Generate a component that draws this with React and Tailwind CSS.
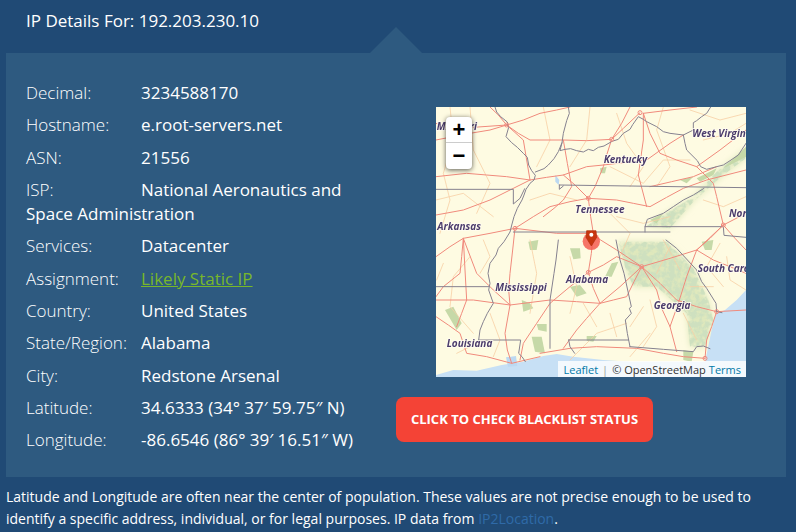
const rows = [
  { label: 'Decimal:', value: '3234588170' },
  { label: 'Hostname:', value: 'e.root-servers.net' },
  { label: 'ASN:', value: '21556' },
  { label: 'ISP:', value: 'National Aeronautics and Space Administration' },
  { label: 'Services:', value: 'Datacenter' },
  { label: 'Assignment:', value: 'Likely Static IP', link: true },
  { label: 'Country:', value: 'United States' },
  { label: 'State/Region:', value: 'Alabama' },
  { label: 'City:', value: 'Redstone Arsenal' },
  { label: 'Latitude:', value: '34.6333 (34° 37′ 59.75″ N)' },
  { label: 'Longitude:', value: '-86.6546 (86° 39′ 16.51″ W)' },
];

// coordinates are 3x map pixels, same grid as the zoomed crops
const borders = [
  'M195 21 L200 36 L212 50 L232 66 L236 82 L228 110 L245 128 L262 142 L280 160 L292 172 L296 195 L305 212 L316 226 L312 240 L300 250 L288 268 L282 285 L276 300 L262 325 L252 350 L246 372 L240 396 L222 425 L205 445 L198 465 L180 490 L174 520 L180 550 L176 570 L190 610 L172 640 L160 665 L150 690 L146 720',
  'M415 21 L418 40 L410 62 L400 100 L396 128 L390 152 L405 148 L422 146 L440 152 L460 156 L475 148 L490 152 L505 142 L522 138 L546 124 L565 118 L580 100 L600 88 L608 74 L625 50 L640 58 L650 65 L680 80 L700 95 L720 100 L760 105 L790 90 L790 68 L800 62 L815 50 L830 40 L842 21',
  'M760 105 L765 130 L770 150 L802 182 L812 200 L830 208 L860 200 L880 195 L900 182 L925 165 L948 130',
  'M396 128 L385 155 L372 176 L355 195 L342 206 L316 216',
  'M18 268 L250 268 L250 312 L270 295 L284 266',
  'M388 255 L948 263 M388 255 L388 268 L400 258',
  'M250 396 L720 396 M645 396 L645 380 L880 380 L882 406 L948 412',
  'M645 380 L652 358 L700 340 L730 320 L760 300 L790 285 L822 265',
  'M18 560 L176 560',
  'M385 420 L378 480 L372 520 L360 600 L360 745',
  'M558 420 L570 480 L582 520 L604 620 L598 625 L604 640 L586 660 L592 700 L600 740',
  'M416 720 L596 720 M416 720 L420 740 L434 760',
  'M600 740 L700 748 L790 755 L800 740 L820 738 L840 746',
  'M708 420 L740 445 L800 510 L815 545 L830 565 L858 610 L860 635 L876 638',
  'M146 720 L272 720 L266 760 L276 770 L286 785',
];

const roads = [
  'M18 120 L120 100 L180 90 L230 75 L280 60 L330 40 L380 30 L420 21',
  'M230 75 L265 100 L300 120 L400 120 L470 122 L545 118 L580 85 L630 38',
  'M230 75 L205 45 L180 21 M230 75 L130 82 L60 90 L18 70',
  'M545 118 L575 70 L600 21 M545 118 L530 165 L520 200 L495 260 L475 295',
  'M475 295 L435 255 L400 225 L350 232 L300 240 L240 270 L180 300 L100 330 L18 345',
  'M475 295 L560 300 L610 310 L660 320 L710 292 L760 265 L830 240 L948 210',
  'M475 295 L420 305 L360 320 L310 350 L255 385 L180 400 L100 415 L60 440 L18 470',
  'M255 385 L248 450 L240 520 L236 570 L240 615 L225 700 L232 750 L245 790',
  'M255 385 L380 400 L480 400 L560 450 L635 500',
  'M475 295 L482 350 L490 400 L484 460 L475 517 L420 560 L360 610 L320 670 L280 730 L270 780',
  'M475 517 L520 495 L560 470 L635 500 L720 475 L800 450 L840 415 L880 375 L948 340',
  'M635 500 L570 560 L510 610 L470 655 L440 690 L400 745',
  'M475 517 L490 565 L510 610 L550 600 L590 590 L612 545 L635 500',
  'M635 500 L680 570 L695 625 L720 680 L740 755',
  'M635 500 L690 550 L740 600 L800 620 L860 635 L948 630',
  'M860 635 L845 680 L830 720 L825 775',
  'M18 600 L130 600 L240 615 L360 600 L440 605 L510 610',
  'M18 650 L55 675 L90 700 L110 760 L170 770 L245 790 L330 770',
  'M330 760 L420 745 L500 740 L620 745 L700 760 L760 770 L825 775',
  'M650 320 L625 225 L640 120 L640 40',
  'M880 375 L860 290 L850 250 L800 200 L740 180 L690 160 L660 100 L640 40',
  'M800 200 L870 150 L948 90 M660 260 L725 245 L790 230 L860 200',
  'M400 120 L412 190 L425 260 L400 300 L372 325 L340 350',
  'M640 40 L720 30 L800 21',
  'M18 230 L110 220 L170 225 L230 230 L300 240',
  'M100 415 L95 470 L90 520 L40 560 L18 590 M100 415 L105 510 L110 600 L95 640 L80 680',
  'M880 375 L915 415 L948 450 M880 375 L800 450 L770 530 L745 610 L720 680',
  'M300 240 L290 180 L280 120 L230 75 M800 450 L850 480 L900 500 L948 520',
  'M240 615 L190 570 L140 520 L100 415',
  'M400 225 L470 200 L520 195 L650 180 L720 130 L760 105',
];

const minorRoads = [
  'M60 21 L70 120 L40 220 L60 300 L30 400 M120 21 L130 150 L180 250 L140 340',
  'M340 21 L360 120 L320 200 M480 21 L470 120 L420 200 M700 21 L680 90 L720 200 L680 260',
  'M540 200 L640 250 L700 180 L780 180 M540 340 L600 400 L570 470 M300 420 L320 520 L300 640',
  'M420 470 L440 560 L420 640 M120 470 L70 530 L60 620 L130 700 M180 640 L210 720 L190 770',
  'M660 600 L680 680 L640 740 M760 640 L800 720 M890 470 L900 540 L948 570 M540 640 L560 710',
  'M18 300 L100 280 L190 350 M700 420 L750 510 M420 780 L500 700 L590 670',
  'M560 40 L590 130 L640 200 L600 260 M780 30 L870 60 L948 40 M820 120 L900 100 L948 70',
  'M300 300 L360 280 L440 300 M560 350 L640 370 L720 350 M820 300 L880 320 L948 290',
  'M160 420 L180 470 L150 520 M40 490 L20 540 M80 760 L140 730 M460 610 L500 680 M600 770 L660 700',
  'M870 430 L830 500 L880 560 M780 560 L850 560 M720 440 L680 520 M640 620 L600 680',
];

const greens = [
  'M295 425 L325 420 L320 450 L300 450 Z',
  'M420 445 L450 445 L452 475 L430 478 Z',
  'M545 490 L565 485 L545 530 L525 530 Z',
  'M420 560 L450 555 L470 580 L440 590 Z',
  'M275 600 L300 610 L310 625 L280 635 Z',
  'M45 630 L70 620 L95 670 L80 690 Z',
  'M320 672 L350 672 L350 695 L325 690 Z',
  'M305 710 L335 710 L345 760 L315 755 Z',
  'M470 708 L500 708 L490 725 L470 722 Z',
  'M815 425 L850 420 L845 450 L825 450 Z',
  'M760 750 L790 755 L785 785 L760 780 Z',
  'M660 360 L700 340 L680 370 Z',
  'M800 235 L860 205 L850 225 L810 245 Z',
  'M880 205 L948 140 L948 170 L900 195 Z',
  'M750 240 L790 230 L770 250 Z',
  'M510 205 L530 200 L525 220 L512 220 Z',
];

const labels = [
  { x: 20, y: 89, t: 'Missouri' },
  { x: 787, y: 110, t: 'West Virginia' },
  { x: 521, y: 188, t: 'Kentucky' },
  { x: 436, y: 340, t: 'Tennessee' },
  { x: 897, y: 350, t: 'North' },
  { x: 22, y: 389, t: 'Arkansas' },
  { x: 408, y: 550, t: 'Alabama' },
  { x: 196, y: 573, t: 'Mississippi' },
  { x: 803, y: 515, t: 'South Carolina' },
  { x: 671, y: 627, t: 'Georgia' },
  { x: 50, y: 742, t: 'Louisiana' },
];

function MapDrawing() {
  return (
    <svg viewBox="18 21 930 810" className="block h-full w-full">
      <defs>
        <filter id="soft" x="0" y="0" width="100%" height="100%">
          <feGaussianBlur stdDeviation="0.9" />
        </filter>
        <filter id="woods" x="0" y="0" width="100%" height="100%">
          <feTurbulence type="fractalNoise" baseFrequency="0.06" numOctaves="3" seed="4" result="noise" />
          <feColorMatrix
            in="noise"
            type="matrix"
            values="0 0 0 0 0.62  0 0 0 0 0.75  0 0 0 0 0.52  0 0 0 3.8 -1.2"
            result="spots"
          />
          <feComposite in="spots" in2="SourceAlpha" operator="in" />
          <feGaussianBlur stdDeviation="1" />
        </filter>
        <filter id="fade">
          <feGaussianBlur stdDeviation="10" />
        </filter>
      </defs>
      <rect x="18" y="21" width="930" height="810" fill="#fefbe2" />
      <path
        d="M565 425 L710 425 L790 505 L835 600 L850 660 L825 740 L780 740 L770 640 L680 560 L610 560 L585 500 Z"
        fill="#dfe8bc"
        filter="url(#fade)"
      />
      <path
        d="M565 425 L710 425 L790 505 L835 600 L850 660 L825 740 L780 740 L770 640 L680 560 L610 560 L585 500 Z"
        fill="#000000"
        filter="url(#woods)"
      />
      <path
        d="M650 378 L700 345 L790 290 L860 215 L948 145 L948 175 L880 225 L790 305 L720 385 Z"
        fill="#dfe8bd"
        filter="url(#fade)"
      />
      <path
        d="M650 378 L700 345 L790 290 L860 215 L948 145 L948 175 L880 225 L790 305 L720 385 Z"
        fill="#000000"
        filter="url(#woods)"
      />
      <g filter="url(#soft)">
        {greens.map((d, i) => (
          <path key={i} d={d} fill="#c6d9a8" />
        ))}
        <path
          d="M18 831 L18 825 L70 810 L140 812 L215 795 L280 785 L340 768 L380 762 L430 770 L520 780 L600 785 L720 785 L825 785 L845 690 L858 640 L885 630 L920 600 L948 570 L948 831 Z"
          fill="#c7e0f5"
        />
        <path d="M228 772 L258 768 L262 798 L234 800 Z" fill="#bcd9f2" />
        <path d="M376 225 L388 240 L386 255 L376 245 Z" fill="#bcd9f2" />
        <g fill="none" strokeLinejoin="round" strokeLinecap="round">
          {minorRoads.map((d, i) => (
            <path key={i} d={d} stroke="#f7cfa4" strokeWidth="2.4" />
          ))}
          {roads.map((d, i) => (
            <path key={i} d={d} stroke="#f08a7c" strokeWidth="3" />
          ))}
          {borders.map((d, i) => (
            <path key={i} d={d} stroke="#85818f" strokeWidth="3" />
          ))}
        </g>
        {[
          [230, 75],
          [545, 118],
          [630, 38],
          [475, 295],
          [255, 385],
          [635, 500],
          [475, 517],
          [880, 375],
          [860, 635],
          [825, 775],
        ].map(([cx, cy], i) => (
          <circle key={i} cx={cx} cy={cy} r="6" fill="none" stroke="#ef8a7e" strokeWidth="3" />
        ))}
        {labels.map((l) => (
          <text
            key={l.t}
            x={l.x}
            y={l.y}
            fill="#4c3c6c"
            stroke="#fffdf0"
            strokeWidth="5"
            fontSize="30"
            fontWeight="700"
            fontStyle="italic"
            fontFamily='"Open Sans", sans-serif'
            style={{ paintOrder: 'stroke' }}
          >
            {l.t}
          </text>
        ))}
      </g>
      <circle cx="484" cy="424" r="26" fill="#f4574c" opacity="0.82" />
      <path
        d="M470 392 L498 392 L500 412 L484 438 L468 412 Z"
        fill="#c7350f"
        stroke="#b02c0a"
        strokeWidth="2"
        strokeLinejoin="round"
      />
      <circle cx="484" cy="404" r="6" fill="#ffffff" />
    </svg>
  );
}

function MapBox() {
  return (
    <div className="relative ml-10 mt-[26px] h-[270px] w-[310px] overflow-hidden bg-[#fefbe2]">
      <MapDrawing />
      <div className="absolute left-[10px] top-[10px] w-[26px] overflow-hidden rounded-[4px] bg-white text-black shadow-[0_1px_5px_rgba(0,0,0,0.65)]">
        <div className="flex h-[26px] items-center justify-center border-b border-[#cccccc] font-['Liberation_Sans',sans-serif] text-[22px] font-bold leading-none">
          +
        </div>
        <div className="flex h-[26px] items-center justify-center font-['Liberation_Sans',sans-serif] text-[22px] font-bold leading-none">
          −
        </div>
      </div>
      <div className="absolute bottom-0 right-0 flex h-4 items-center bg-white/80 pl-[5px] pr-[5px] text-[11px] leading-none text-[#333333]">
        <span className="text-[#0078a8]">Leaflet</span>
        <span className="mx-[4px] text-[#999999]">|</span>
        <span>© OpenStreetMap</span>
        <span className="ml-[3px] text-[#0078a8]">Terms</span>
      </div>
    </div>
  );
}

export default function App() {
  return (
    <div className="h-[532px] w-[796px] overflow-hidden bg-[#204a75] font-['Open_Sans',sans-serif] text-white">
      <div className="relative h-[53px] pl-[26px] pt-[9px] text-[17px] leading-6">
        IP Details For: 192.203.230.10
        <div className="absolute bottom-0 left-[370px] h-[26px] w-[52px] bg-[#2e5a80] [clip-path:polygon(50%_0,100%_100%,0_100%)]" />
      </div>

      <div className="mx-[6px] flex h-[424px] w-[780px] bg-[#2e5a80] pl-5 pt-7">
        <div className="w-[350px]">
          {rows.map((row) => (
            <div key={row.label} className="mb-2 text-[17px] leading-[24.29px]">
              <span className="inline-block w-[115px] font-light">{row.label}</span>
              {row.link ? (
                <a className="text-[#78b72a] underline">{row.value}</a>
              ) : (
                row.value
              )}
            </div>
          ))}
        </div>
        <div className="ml-5">
          <MapBox />
          <a className="mt-5 flex h-[45px] w-[257px] items-center justify-center rounded-lg bg-[#f44336] text-[13px] font-bold uppercase text-white">
            Click to check blacklist status
          </a>
        </div>
      </div>

      <p className="pl-[6px] pt-[9px] text-sm leading-[22px]">
        Latitude and Longitude are often near the center of population. These values are not precise enough to be used to
        identify a specific address, individual, or for legal purposes. IP data from{' '}
        <a className="text-[#2f6aa8]">IP2Location</a>.
      </p>
    </div>
  );
}
